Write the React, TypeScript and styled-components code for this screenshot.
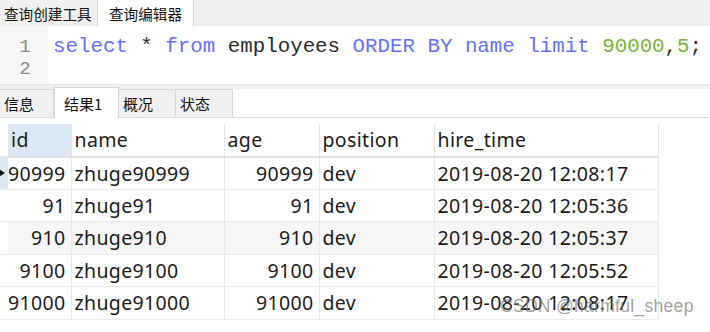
import styled, { createGlobalStyle } from "styled-components";

const GlobalStyle = createGlobalStyle`
    body {
        margin: 0;
        background: #ffffff;
        font-family: "Noto Sans", "Noto Sans CJK SC", sans-serif;
    }
`

const Page = styled.div`
    position: relative;
    width: 710px;
    height: 332px;
    overflow: hidden;
    background: #ffffff;
`

const TopBar = styled.div`
    display: flex;
    height: 26px;
    background: #f0f0f0;
`

const TopTab = styled.div<{ active?: boolean }>`
    display: flex;
    align-items: center;
    flex-shrink: 0;
    box-sizing: border-box;
    white-space: nowrap;
    font-family: "Noto Sans CJK SC", sans-serif;
    font-size: 14.6px;
    color: #111;
    border-right: 1px solid #d4d4d4;
    ${({ active }) => active ?
        `
            background: #ffffff;
            width: 96px;
            padding-left: 11px;
        ` : `
            background: #f0f0f0;
            width: 98px;
            padding-left: 4px;
        `}
`

const Editor = styled.div`
    display: flex;
    height: 58px;
    background: #ffffff;
`

const Gutter = styled.div`
    width: 48px;
    padding: 10px 0 0 2px;
    background: #f6f6f6;
    color: #8a8a8a;
    font-family: "Liberation Mono", monospace;
    font-size: 19px;
    line-height: 22px;
    text-align: center;
    box-sizing: border-box;
`

const Code = styled.div`
    padding: 10px 0 0 5px;
    font-family: "Liberation Mono", monospace;
    font-size: 20.8px;
    line-height: 22px;
    color: #2b2b2b;
    white-space: pre;
`

const Token = styled.span<{ kind: 'kw' | 'num' }>`
    color: ${({ kind }) => kind === 'kw' ? '#6470ff' : '#78b53e'};
`

const Divider = styled.div`
    height: 4px;
    background: #f0f0f0;
    border-top: 1px solid #e6e6e6;
`

const ResultTabs = styled.div`
    display: flex;
    align-items: flex-end;
    height: 29px;
    border-bottom: 1px solid #dadada;
    box-sizing: border-box;
`

const ResultTab = styled.div<{ active?: boolean; w: number }>`
    display: flex;
    align-items: center;
    width: ${({ w }) => w}px;
    padding-left: 4px;
    box-sizing: border-box;
    white-space: nowrap;
    font-family: "Noto Sans CJK SC", sans-serif;
    font-size: 15px;
    color: #111;
    border: 1px solid #d6d6d6;
    border-bottom: none;
    ${({ active }) => active ?
        `
            height: 31px;
            background: #ffffff;
            padding-left: 9px;
            margin-bottom: -1px;
        ` : `
            height: 28px;
            background: #f0f0f0;
            border-left: none;
        `}
`

const TableWrap = styled.div`
    padding-top: 6px;
`

const Grid = styled.table`
    border-collapse: collapse;
    table-layout: fixed;
    font-family: "Noto Sans", "Noto Sans CJK SC", sans-serif;
    font-size: 19.5px;
    letter-spacing: 0.35px;
    color: #1b1b1b;
`

const Row = styled.tr<{ shade?: boolean }>`
    height: 32.5px;
    background: ${({ shade }) => shade ? '#f6f6f6' : '#ffffff'};
`

const Marker = styled.td<{ current?: boolean }>`
    width: 8px;
    padding: 0;
    position: relative;
    background: ${({ current }) => current ? '#dbe9f7' : '#ffffff'};
    border-bottom: 1px solid #ebebeb;
`

const Arrow = styled.span`
    position: absolute;
    left: -1px;
    top: 50%;
    transform: translateY(-50%);
    width: 0;
    height: 0;
    border-top: 4px solid transparent;
    border-bottom: 4px solid transparent;
    border-left: 6px solid #111;
`

const HeadCell = styled.th<{ w: number; picked?: boolean }>`
    width: ${({ w }) => w}px;
    padding: 0 0 0 3px;
    text-align: left;
    font-weight: 400;
    background: ${({ picked }) => picked ? '#dbe9f7' : '#ffffff'};
    border-right: 1px solid #e4e4e4;
    border-bottom: 2px solid #e2e2e2;
    box-sizing: border-box;
`

const Cell = styled.td<{ right?: boolean }>`
    padding: 0 ${({ right }) => right ? '5px 0 0' : '0 0 3px'};
    text-align: ${({ right }) => right ? 'right' : 'left'};
    white-space: nowrap;
    overflow: hidden;
    border-right: 1px solid #e8e8e8;
    border-bottom: 1px solid #ebebeb;
`

const Watermark = styled.div`
    position: absolute;
    left: 500px;
    top: 296px;
    font-family: "Liberation Sans", sans-serif;
    font-size: 17.5px;
    color: rgba(120, 120, 120, 0.7);
    letter-spacing: 0.3px;
    white-space: nowrap;
`

const rows = [
    { id: '90999', name: 'zhuge90999', age: '90999', time: '2019-08-20 12:08:17' },
    { id: '91', name: 'zhuge91', age: '91', time: '2019-08-20 12:05:36' },
    { id: '910', name: 'zhuge910', age: '910', time: '2019-08-20 12:05:37' },
    { id: '9100', name: 'zhuge9100', age: '9100', time: '2019-08-20 12:05:52' },
    { id: '91000', name: 'zhuge91000', age: '91000', time: '2019-08-20 12:08:17' },
]

const App = () => {

    return (
        <Page>
            <GlobalStyle />
            <TopBar>
                <TopTab>查询创建工具</TopTab>
                <TopTab active>查询编辑器</TopTab>
            </TopBar>
            <Editor>
                <Gutter>
                    <div>1</div>
                    <div>2</div>
                </Gutter>
                <Code>
                    <div><Token kind="kw">select</Token> * <Token kind="kw">from</Token> employees <Token kind="kw">ORDER BY</Token> <Token kind="kw">name</Token> <Token kind="kw">limit</Token> <Token kind="num">90000</Token>,<Token kind="num">5</Token>;</div>
                    <div> </div>
                </Code>
            </Editor>
            <Divider />
            <ResultTabs>
                <ResultTab w={54}>信息</ResultTab>
                <ResultTab w={65} active>结果1</ResultTab>
                <ResultTab w={57}>概况</ResultTab>
                <ResultTab w={57}>状态</ResultTab>
            </ResultTabs>
            <TableWrap>
                <Grid>
                    <thead>
                        <Row>
                            <Marker />
                            <HeadCell w={63} picked>id</HeadCell>
                            <HeadCell w={153}>name</HeadCell>
                            <HeadCell w={95}>age</HeadCell>
                            <HeadCell w={115}>position</HeadCell>
                            <HeadCell w={224}>hire_time</HeadCell>
                        </Row>
                    </thead>
                    <tbody>
                        {rows.map((r, i) => (
                            <Row key={r.id} shade={i === 2}>
                                <Marker current={i === 0}>{i === 0 && <Arrow />}</Marker>
                                <Cell right>{r.id}</Cell>
                                <Cell>{r.name}</Cell>
                                <Cell right>{r.age}</Cell>
                                <Cell>dev</Cell>
                                <Cell>{r.time}</Cell>
                            </Row>
                        ))}
                    </tbody>
                </Grid>
            </TableWrap>
            <Watermark>CSDN @harmful_sheep</Watermark>
        </Page>
    )
}

export default App;
